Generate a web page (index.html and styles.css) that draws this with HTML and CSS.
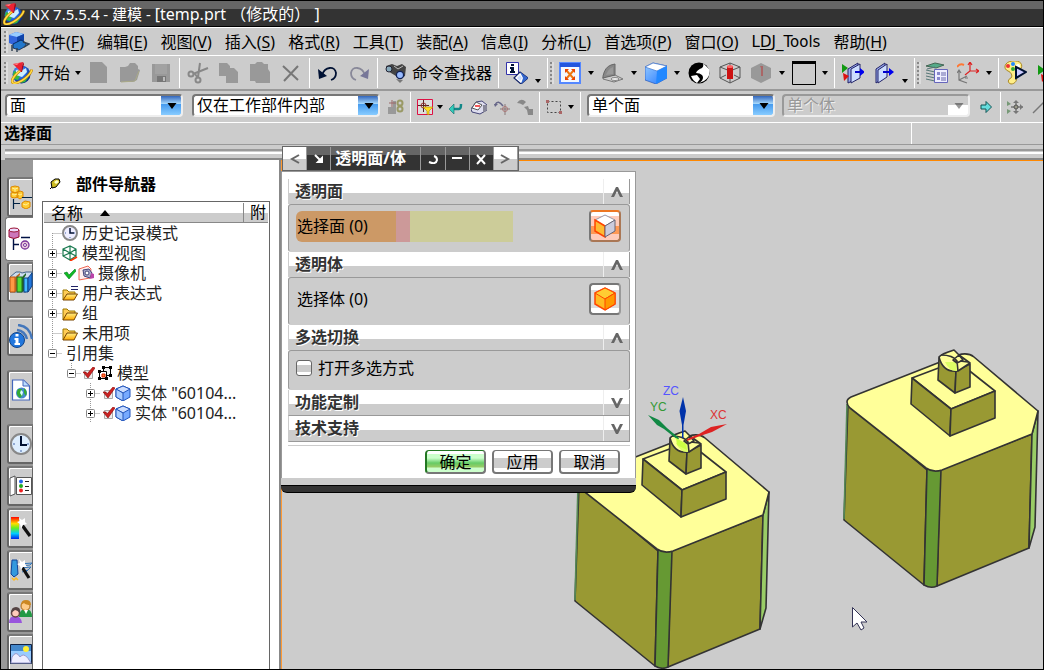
FILE: index.html
```html
<!DOCTYPE html>
<html lang="zh-CN">
<head>
<meta charset="utf-8">
<title>NX 7.5.5.4 - 建模</title>
<link rel="stylesheet" href="styles.css">
</head>
<body>
<svg class="defs" aria-hidden="true">
  <defs>
    <radialGradient id="g-ball" cx=".4" cy=".35" r=".7"><stop offset="0" stop-color="#9cf"/><stop offset=".5" stop-color="#26d"/><stop offset="1" stop-color="#027"/></radialGradient>
    <linearGradient id="g-cube" x1="0" y1="0" x2="1" y2="1"><stop offset="0" stop-color="#9cf"/><stop offset="1" stop-color="#27f"/></linearGradient>
    <linearGradient id="g-rain" x1="0" y1="0" x2="0" y2="1"><stop offset="0" stop-color="#f00"/><stop offset=".3" stop-color="#fd0"/><stop offset=".5" stop-color="#6e2"/><stop offset=".75" stop-color="#0cf"/><stop offset="1" stop-color="#02e"/></linearGradient>
    <linearGradient id="g-fold" x1="0" y1="0" x2="0" y2="1"><stop offset="0" stop-color="#fe8"/><stop offset="1" stop-color="#fa0"/></linearGradient>
  </defs>
  <symbol id="i-nx" viewBox="0 0 22 22"><circle cx="10.500" cy="12.500" r="9" fill="url(#g-ball)"/><path d="M3 9l4 1 2 4-2 4-4-1q-2-4 0-8zM12 17l5-1-3 4-4 1z" fill="#3b4"/><path d="M5 8l5 1 5-3 1 4-5 5-6-2z" fill="#cef"/><ellipse cx="11" cy="13" rx="12" ry="4.500" transform="rotate(-38 11 13)" fill="none" stroke="#b70" stroke-width="2.600" stroke-dasharray="41 14" stroke-dashoffset="-2"/><ellipse cx="11" cy="13" rx="12" ry="4.500" transform="rotate(-38 11 13)" fill="none" stroke="#fd4" stroke-width="1.600" stroke-dasharray="41 14" stroke-dashoffset="-2"/><path d="M2 2l10-2-2 10z" fill="#e23"/><path d="M12 0l1 2-2 8-1 0z" fill="#a01"/><path d="M2 2l6-1-2 2z" fill="#f88"/></symbol>
  <symbol id="i-part" viewBox="0 0 22 22"><path d="M1 4l7-3 8 2v8l-6 5-9-4z" fill="#36d"/><path d="M1 4l7-3 8 2-7 3z" fill="#9cf"/><path d="M9 6l7-3v9l-7 4z" fill="#14a"/><path d="M5 13l8-4 5 3v3l-7 4-6-2z" fill="#27c" stroke="#013" stroke-width=".7"/><path d="M15 11l6 2-5 3M4 14v6M9 17v4" stroke="#345" stroke-width="1.500" fill="none"/></symbol>
  <symbol id="i-new" viewBox="0 0 22 22"><path d="M2 0h12l5 5v16H2z" fill="#999"/></symbol>
  <symbol id="i-open" viewBox="0 0 22 22"><path d="M1 5h5l3-1 2-3h5l3 3v3l2 1-3 10-4 2H1z" fill="#999"/><path d="M2 20l14-1 4-10" stroke="#aa8" fill="none"/></symbol>
  <symbol id="i-save" viewBox="0 0 22 22"><path d="M2 2h18v18H2z" fill="#999"/><path d="M5 2h12v10H5z" fill="#a2a2a2"/><path d="M7 14h9v6H7z" fill="#777"/><path d="M13 15h2v4h-2z" fill="#bbb"/></symbol>
  <symbol id="i-cut" viewBox="0 0 22 22"><g fill="none" stroke="#888" stroke-width="2"><circle cx="4" cy="12" r="2.500"/><circle cx="11" cy="18" r="2.500"/><path d="M6 12l15-6M11 15l2-14M8 12l3 4"/></g></symbol>
  <symbol id="i-copy" viewBox="0 0 22 22"><path d="M1 1h8l3 3v10H1zM8 6h8l4 4v11H8z" fill="#999"/></symbol>
  <symbol id="i-paste" viewBox="0 0 22 22"><path d="M1 2h5l2-2h5l2 2h4v5l2 3v11H7l-1-2H1z" fill="#999"/></symbol>
  <symbol id="i-del" viewBox="0 0 22 22"><path d="M3 4l15 14M18 4L4 19" stroke="#777" stroke-width="2"/></symbol>
  <symbol id="i-undo" viewBox="0 0 22 22"><path d="M5 13C8 4 18 4 19 11c0 4-2 6-5 7" fill="none" stroke="#013" stroke-width="1.800"/><path d="M1 7l1 10 8-3z" fill="#013"/></symbol>
  <symbol id="i-redo" viewBox="0 0 22 22"><path d="M17 13C14 4 4 4 3 11c0 4 2 6 5 7" fill="none" stroke="#889" stroke-width="1.800"/><path d="M21 7l-1 10-8-3z" fill="#779"/></symbol>
  <symbol id="i-bino" viewBox="0 0 22 22"><path d="M1 4l6-2 5 2 5-2 4 3-1 9-5 3-4-3-5-3-4-3z" fill="#444"/><circle cx="4" cy="7" r="3" fill="#8ab" stroke="#223"/><circle cx="15" cy="13" r="3.600" fill="#9bf" stroke="#125" stroke-width="1.300"/><path d="M9 4l4 3 5-3" stroke="#bbb" fill="none"/><path d="M11 17l7 1-3 3z" fill="#777"/></symbol>
  <symbol id="i-info" viewBox="0 0 22 22"><path d="M.5.500h12v12H.5z" fill="#fff" stroke="#33a"/><path d="M5 2h3v2H5zM4 5h4v4h1v2H4V9h1V7H4z" fill="#013"/><path d="M8 16l6-6 8 6-7 6z" fill="#fff" stroke="#126" stroke-width="1.200"/><path d="M14 10l8 6-7 6 2-6z" fill="#36c"/><path d="M11 16l3-3 2 3-2 3z" fill="#cdf"/></symbol>
  <symbol id="i-fit" viewBox="0 0 22 22"><path d="M1 1h20v20H1z" fill="#f4f8ff" stroke="#58f" stroke-width="2"/><path d="M1 1h20v4H1z" fill="#25d"/><path d="M7 8l8 9M15 8l-8 9" stroke="#e71" stroke-width="2"/><path d="M6 7h4l-4 4zM16 7v4l-4-4zM6 18v-4l4 4zM16 18h-4l4-4z" fill="#e40"/></symbol>
  <symbol id="i-wedge" viewBox="0 0 22 22"><path d="M1 15l12-2 8 4-9 3-11-3z" fill="#ccc" stroke="#777"/><path d="M1 14Q3 5 9 3l4-1v11L1 16z" fill="#888" stroke="#666"/><path d="M4 13Q6 7 11 5v7z" fill="#999"/><ellipse cx="13" cy="17" rx="4" ry="1.500" fill="#eee" stroke="#888"/></symbol>
  <symbol id="i-cube" viewBox="0 0 22 22"><path d="M0 5l8-4 14 3v12l-11 6L0 18z" fill="url(#g-cube)" stroke="#25b" stroke-width=".7"/><path d="M0 5l8-4 14 3-10 5z" fill="#fff" stroke="#47c" stroke-width=".7"/><path d="M12 9l10-5v12l-11 6z" fill="#28f"/></symbol>
  <symbol id="i-yin" viewBox="0 0 22 22"><circle cx="11" cy="11" r="10.500" fill="#000"/><path d="M15 1l6 6q2 8-5 12l-5 2q6-4 3-8-2-2-6-2 1-3 6-5 2-2 1-5z" fill="#fff"/><path d="M3 14l6-1 3 4-3 4q-4-2-6-7z" fill="#fff"/></symbol>
  <symbol id="i-cubes" viewBox="0 0 22 22"><path d="M1 5l10-4 10 4v11l-10 5-10-5zM1 5l10 4 10-4M11 9v12M11 1v6M1 16l6-3M21 16l-6-3" fill="none" stroke="#555"/><path d="M8 4h6v13H8z" fill="#c11"/><ellipse cx="11" cy="4.500" rx="3" ry="1.500" fill="#f66"/></symbol>
  <symbol id="i-cubeg" viewBox="0 0 22 22"><path d="M1 6l10-5 10 5v10l-10 5-10-5z" fill="#999"/><path d="M10 4h3v10h-2V6z" fill="#a66"/></symbol>
  <symbol id="i-rect" viewBox="0 0 24 24"><path d="M.5 1v22.500h23V1" fill="#ccc" stroke="#000"/><path d="M0 0h24v3H0z" fill="#000"/></symbol>
  <symbol id="i-clip1" viewBox="0 0 22 22"><path d="M6 7l10-6v15L6 21z" fill="#9ae" stroke="#226"/><path d="M9 7l9-5v14L9 21z" fill="#cdf" stroke="#226"/><path d="M0 2l6 4-6 5z" fill="#191"/><path d="M1 11l6 3-5 5z" fill="#d11"/><path d="M13 10h6" stroke="#00c" stroke-width="2"/><path d="M18 6l5 4-5 4z" fill="#00e"/></symbol>
  <symbol id="i-clip2" viewBox="0 0 22 22"><path d="M3 7l9-6v14l-9 6z" fill="#9ae" stroke="#226"/><path d="M5 8l9-6v13l-9 6z" fill="#cdf" stroke="#226"/><path d="M10 10h8" stroke="#00c" stroke-width="2"/><path d="M16 6l5 4-5 4z" fill="#00e"/></symbol>
  <symbol id="i-layer" viewBox="0 0 22 22"><path d="M0 4l9-3 9 2-8 3z" fill="#5a8" stroke="#465"/><path d="M0 8l9 2M0 11l9 2M0 14l9 2M0 17l9 2M1 7l8-2" fill="none" stroke="#577"/><path d="M8.500 7.500h13v13h-13z" fill="#eef" stroke="#66b"/><path d="M11 10h3v3h-3zM11 15h3v3h-3z" fill="#88c"/><path d="M15 11h5M15 13h5M15 16h5M15 18h5" stroke="#66a"/></symbol>
  <symbol id="i-csys" viewBox="0 0 22 22"><path d="M13 1v8l-5 4M13 9h8M11 3l2-3 2 3M19 7l3 2-3 2" fill="none" stroke="#d22" stroke-width="1.200"/><path d="M2 9v9l8 3M2 18l8-4M0 11l2-3 2 3M8 16l3 0" fill="none" stroke="#777" stroke-width="1.200"/><path d="M0 5q3-4 7-2" stroke="#f73" fill="none" stroke-width="2"/></symbol>
  <symbol id="i-pal" viewBox="0 0 24 24"><path d="M9 0c9-1 12 4 8 9-3 3-5 2-4 6 2 4-1 8-5 8-4-1-3-5 0-6 2-2 0-6-3-7-5-2-4-9 4-10z" fill="#fe8" stroke="#a82"/><circle cx="5" cy="5" r="2" fill="#e33"/><circle cx="10" cy="3" r="2" fill="#28f"/><circle cx="15" cy="5" r="2" fill="#fff"/><circle cx="10" cy="8" r="2" fill="#3a3"/><path d="M13 6l10 5-10 6z" fill="#ccf" stroke="#013" stroke-width="2"/></symbol>
  <symbol id="i-gored" viewBox="0 0 22 22"><path d="M6 3l7 5-7 5z" fill="#191"/><path d="M9 12l6 3-5 5z" fill="#d11"/></symbol>
  <symbol id="i-caret" viewBox="0 0 6 4"><path d="M0 0h6L3 4z" fill="#000"/></symbol>

  <symbol id="s-links" viewBox="0 0 16 16"><path d="M0 8h8v7H0zM5 2h3v8H5z" fill="#999"/><path d="M1 4h7M4 1v7" stroke="#966"/><circle cx="12" cy="4" r="2.500" fill="none" stroke="#996" stroke-width="2"/><circle cx="12" cy="10" r="2.500" fill="none" stroke="#996" stroke-width="2"/></symbol>
  <symbol id="s-filter" viewBox="0 0 16 16"><path d="M.5.500h15v15H.5z" fill="#ddd" stroke="#d14"/><path d="M6.500 1v12M1 6.500h11" stroke="#522"/><circle cx="6.500" cy="6.500" r="2.500" fill="none" stroke="#933"/><path d="M6 8h10l-4 4v4l-2-1v-3z" fill="#fd2" stroke="#a80" stroke-width=".6"/></symbol>
  <symbol id="s-back" viewBox="0 0 16 16"><path d="M5 10h6q2 0 2-5" stroke="#188" stroke-width="2.500" fill="none"/><path d="M6 5v10L1 10z" fill="#3cb" stroke="#166" stroke-width=".6"/></symbol>
  <symbol id="s-sheet" viewBox="0 0 16 16"><path d="M0 10l5-7 6-1 5 4v5l-7 4-8-2z" fill="#dde" stroke="#447"/><path d="M5 3l6 3-4 5-6-2z" fill="#fff" stroke="#555"/><path d="M4 7l5 0" stroke="#e22" stroke-width="1.500"/><path d="M12 6l4 0v5l-4 3z" fill="#889"/></symbol>
  <symbol id="s-snap" viewBox="0 0 16 16"><path d="M1 6q3-6 8 1" stroke="#668" stroke-width="1.600" fill="none"/><path d="M0 5h4L1 8z" fill="#668"/><path d="M11 5v11M6 10h10" stroke="#877"/><circle cx="11" cy="10" r="2.500" fill="none" stroke="#a77"/></symbol>
  <symbol id="s-chain" viewBox="0 0 16 16"><path d="M0 4q4-6 9-1l-3 3q-3-2-6-2zM7 8l4-1 1 3h4v6h-5l-1-5z" fill="#888"/></symbol>
  <symbol id="s-marq" viewBox="0 0 16 16"><path d="M1.500 2.500h13v11h-13z" fill="none" stroke="#444" stroke-dasharray="2 2"/><path d="M0 1h3v3H0zM13 12h3v3h-3z" fill="#a66"/></symbol>
  <symbol id="s-go" viewBox="0 0 16 16"><path d="M3 6h5V2.500l5.500 5.500L8 13.500V10H3z" fill="#6dd" stroke="#155"/></symbol>
  <symbol id="s-ptsn" viewBox="0 0 16 16"><path d="M0 2l4 3-4 2zM0 10l4 2-4 3z" fill="#797"/><path d="M9 2v12M4 8h12" stroke="#777" stroke-width="1.500"/><path d="M6 4l3-3 3 3zM6 12l3 3 3-3zM13 5l3 3-3 3z" fill="#777"/><circle cx="9" cy="8" r="2" fill="#998" stroke="#555"/></symbol>
  <symbol id="s-line" viewBox="0 0 16 16"><path d="M3 14L14 3" stroke="#777" stroke-width="1.500"/></symbol>

  <symbol id="t-plus" viewBox="0 0 15 20"><path d="M5.500 0v20M5.500 10.500H15" stroke="#999" stroke-dasharray="1 1"/><rect x="1.500" y="6.500" width="8" height="8" rx="1" fill="#fff" stroke="#888"/><path d="M3 10.500h5M5.500 8v5" stroke="#000"/></symbol>
  <symbol id="t-minus" viewBox="0 0 15 20"><path d="M5.500 0v6M5.500 10.500H15" stroke="#999" stroke-dasharray="1 1"/><rect x="1.500" y="6.500" width="8" height="8" rx="1" fill="#fff" stroke="#888"/><path d="M3 10.500h5" stroke="#000"/></symbol>
  <symbol id="t-first" viewBox="0 0 15 20"><path d="M5.500 10v10M5.500 10.500H15" stroke="#999" stroke-dasharray="1 1"/></symbol>
  <symbol id="t-leaf" viewBox="0 0 15 20"><path d="M5.500 0v20M5.500 10.500H15" stroke="#999" stroke-dasharray="1 1"/></symbol>
  <symbol id="n-clock" viewBox="0 0 16 16"><circle cx="8" cy="8" r="7" fill="#eef" stroke="#888" stroke-width="2"/><path d="M8 3v5h4" stroke="#013" stroke-width="1.500" fill="none"/><path d="M3 8h1M8 12v1M12 8h1" stroke="#46a"/></symbol>
  <symbol id="n-view" viewBox="0 0 16 16"><path d="M1 4l7-3 6 3v7l-6 4-7-4zM1 4l7 4 6-4M8 8v7M8 1v7M1 11l7-3 6 3" fill="none" stroke="#1a7a50" stroke-width="1.200"/><path d="M8 16l7-4" stroke="#f30" stroke-width="1.600"/></symbol>
  <symbol id="n-ok" viewBox="0 0 12 12"><path d="M0 6l3-1 2 3 6-6 1 2-7 8z" fill="#1b2" stroke="#072" stroke-width=".6"/></symbol>
  <symbol id="n-cam" viewBox="0 0 16 16"><path d="M1 4l9-3 3 3-1 9-11 2z" fill="#fee" stroke="#e65"/><path d="M5 5l6-1 3 4-2 5-6-2z" fill="#aac" stroke="#447"/><circle cx="9" cy="8" r="2" fill="#fff" stroke="#447"/><path d="M13 8l3 1v4l-4 1z" fill="#b4a"/></symbol>
  <symbol id="n-fold" viewBox="0 0 16 16"><path d="M1 15V4h4l2 2h6v3" fill="#fc5" stroke="#970"/><path d="M1 15l4-7h10.500l-3.500 7z" fill="url(#g-fold)" stroke="#740"/></symbol>
  <symbol id="n-foldx" viewBox="0 0 16 16"><path d="M1 15V5h4l2 2h6v2" fill="#fc5" stroke="#970"/><path d="M1 15l4-6h10.500l-3.500 6z" fill="url(#g-fold)" stroke="#740"/><path d="M9 1.500h7M9 4.500h7" stroke="#226"/></symbol>
  <symbol id="n-red" viewBox="0 0 12 12"><path d="M1.500 3.500h8v8h-8z" fill="#eee" stroke="#aaa"/><path d="M0 5l3 0 1 2 6-7 2 1-7 10z" fill="#c22" stroke="#800" stroke-width=".6"/></symbol>
  <symbol id="n-set" viewBox="0 0 16 16"><path d="M6.500 2.500h7v8h-7z" fill="#eee" stroke="#000"/><path d="M2.500 6.500h7v7h-7z" fill="#fff" stroke="#000"/><path d="M5 1h3v3H5zM12 1h3v3h-3zM12 9h3v3h-3zM1 5h3v3H1zM1 12h3v3H1zM8 12h3v3H8z" fill="#000"/><path d="M5 9h3v3H5z" fill="#f83" stroke="#d20"/></symbol>
  <symbol id="n-body" viewBox="0 0 16 16"><path d="M1 4l7-3 7 3v8l-7 4-7-4z" fill="#7af" stroke="#25b"/><path d="M1 4l7-3 7 3-7 4z" fill="#cdf" stroke="#25b"/><path d="M8 8v8l-7-4V4z" fill="#acf" stroke="#25b"/></symbol>
  <symbol id="n-pin" viewBox="0 0 12 12"><path d="M2 4l4-3 4 0 1 3-4 5-4 1z" fill="#cb2" stroke="#000"/><path d="M5 4l3-2 2 2-3 2z" fill="#ffc"/><path d="M3 9l-2 2" stroke="#000"/></symbol>

  <symbol id="b-asm" viewBox="0 0 24 24"><g fill="#fc3" stroke="#d80"><path d="M2 2l4-1 4 1v4l-4 2-4-2zM2 8l4-1 3 1v4l-4 1-3-1zM8 8l3-2 3 1v5l-3 2-3-2zM13 18l3-2 5 1v5l-4 2-4-2z"/></g><path d="M3 3l3 1 3-1M6 4v3M3 9l2 1 3-1M9 9l2 1 2-1M14 19l3 1 3-2" stroke="#fe9" fill="none"/><path d="M4.500 14v10M4 18.500h7M13 12.500h10" stroke="#024" stroke-width="1.200"/></symbol>
  <symbol id="b-part" viewBox="0 0 24 24"><path d="M1 3v7q5 3 10 0V3z" fill="#c7b" stroke="#913"/><ellipse cx="6" cy="3" rx="5" ry="2" fill="#edf" stroke="#913"/><path d="M5.500 12v11M5 17.500h6M13 10.500h9" stroke="#014" stroke-width="1.400"/><circle cx="17" cy="18" r="4" fill="#ecd" stroke="#739" stroke-width="1.300"/><circle cx="17" cy="18" r="1.500" fill="#fff" stroke="#739"/></symbol>
  <symbol id="b-books" viewBox="0 0 24 24"><path d="M1 7l6-5h4l2 1 4-1 6 0v14l-6 6H1z" fill="#cde" stroke="#468"/><path d="M1 7h5v15H1z" fill="#f94" stroke="#b51"/><path d="M6 7l5-4v2L8 8v13l-2 1z" fill="#b62"/><path d="M8 7h5v15H8z" fill="#5d3" stroke="#262"/><path d="M13 7l4-4v2l-2 3v13l-2 1z" fill="#262"/><path d="M15 8h4v14h-4z" fill="#4bf" stroke="#148"/><path d="M19 8l4-5v13l-4 6z" fill="#27d" stroke="#148"/></symbol>
  <symbol id="b-rss" viewBox="0 0 24 24"><circle cx="8" cy="16" r="7.500" fill="#27d" stroke="#148"/><path d="M6.500 10h3v2.500h-3zM5.500 14h4v5h1.500v2h-5.500v-2h1v-3h-1z" fill="#fff"/><path d="M8 6q8 1 10 9M9 1q12 1 14 14" fill="none" stroke="#47b" stroke-width="2.400"/></symbol>
  <symbol id="b-web" viewBox="0 0 24 24"><path d="M3.500 2h11l6 6v14h-17z" fill="#fff" stroke="#46b" stroke-width="1.200"/><path d="M14 2v6h6" fill="#bdf" stroke="#46b"/><circle cx="12.500" cy="15" r="5.500" fill="#48c"/><path d="M9 11l4 0-1 3 2 3-3 3q-5-3-2-9zM15 10q4 3 2 8l-2-3z" fill="#3a3"/><path d="M12 12l2 2-1 4-2-3z" fill="#dff"/></symbol>
  <symbol id="b-clock" viewBox="0 0 24 24"><circle cx="12" cy="12" r="10" fill="#def" stroke="#888" stroke-width="2"/><path d="M12 4v9h6" fill="none" stroke="#013" stroke-width="2"/><path d="M4 12h2M12 18v2M18 12h2" stroke="#46a"/></symbol>
  <symbol id="b-pal" viewBox="0 0 24 24"><path d="M1 4l5-2v18l-5 2z" fill="#fff" stroke="#555"/><path d="M7.500 3.500h15v17h-15z" fill="#fff" stroke="#555"/><circle cx="12" cy="7.500" r="2" fill="#26e"/><circle cx="12" cy="12" r="2" fill="#2a2"/><circle cx="12" cy="16.500" r="2" fill="#e22"/><path d="M16 7.500h4M16 12.500h4M16 16.500h4" stroke="#222"/></symbol>
  <symbol id="b-rain" viewBox="0 0 24 24"><path d="M2 1h8v22H2z" fill="url(#g-rain)"/><path d="M13 9l8 11" stroke="#111" stroke-width="3.200"/><path d="M10 2l3 2 3-2 0 4 2 2-4 1-2 4-1-5-3-2 3-1z" fill="#fff"/></symbol>
  <symbol id="b-wand" viewBox="0 0 24 24"><path d="M3 2l5 0 1 14-4 3-3-3z" fill="#39d" stroke="#149"/><path d="M11 6l12-1-2 2-9 1M12 10l10-1-3 3M13 14l6-2-3 3" stroke="#37b" fill="none"/><path d="M3 20l2 2 2-2 2 2" stroke="#fb2" stroke-width="1.500" fill="none"/><path d="M13 9l7 11" stroke="#111" stroke-width="3.200"/><path d="M10 1l3 3 3-2 0 4 2 3-4 0-2 3-1-4-3-2 3-1z" fill="#fff"/></symbol>
  <symbol id="b-users" viewBox="0 0 24 24"><path d="M10 17q0-8 7-8 6 0 6 8z" fill="#294"/><circle cx="16.500" cy="6" r="4.500" fill="#fc8" stroke="#a61"/><path d="M12 5q0-5 5-5t5 5q-5 0-7-2z" fill="#c82"/><path d="M15 10l2 4 2-4z" fill="#fff"/><path d="M0 23q0-7 6-7t7 7z" fill="#95d"/><circle cx="6.500" cy="13" r="4" fill="#fcb" stroke="#644" stroke-width="1.500"/><path d="M2 13q0-6 5-6t4 6q-3-3-5-3z" fill="#544"/></symbol>
  <symbol id="b-pic" viewBox="0 0 24 24"><path d="M1.500 2.500h21v19h-21z" fill="#48c" stroke="#124"/><path d="M2 9h20v12H2z" fill="#9cf"/><circle cx="17" cy="7" r="3" fill="#fe3"/><path d="M2 21l1-6q4-7 8 0l1-1q4-4 10 7z" fill="#eef" stroke="#99c"/></symbol>
  <symbol id="c-up" viewBox="0 0 12 10"><path d="M0 10L5 0h2l5 10H9L6 4l-3 6z" fill="#666"/></symbol>
  <symbol id="c-down" viewBox="0 0 12 10"><path d="M0 0l5 10h2l5-10H9L6 6 3 0z" fill="#666"/></symbol>
</svg>

<div class="app">
  <header class="titlebar"><svg class="ic22"><use href="#i-nx"/></svg><h1>NX 7.5.5.4 - 建模 - <span>[temp.prt （修改的） ]</span></h1></header>

  <nav class="menubar">
    <span class="grip"></span><svg class="ic22"><use href="#i-part"/></svg>
    <button>文件(<u>F</u>)</button><button>编辑(<u>E</u>)</button><button>视图(<u>V</u>)</button><button>插入(<u>S</u>)</button><button>格式(<u>R</u>)</button><button>工具(<u>T</u>)</button><button>装配(<u>A</u>)</button><button>信息(<u>I</u>)</button><button>分析(<u>L</u>)</button><button>首选项(<u>P</u>)</button><button>窗口(<u>O</u>)</button><button class="latin">L<u>D</u>J_Tools</button><button>帮助(<u>H</u>)</button>
  </nav>

  <div class="toolbar">
    <span class="grip"></span>
    <button class="start"><svg class="ic22"><use href="#i-nx"/></svg>开始<svg class="caret"><use href="#i-caret"/></svg></button>
    <button class="tb" aria-label="新建"><svg><use href="#i-new"/></svg></button><button class="tb" aria-label="打开"><svg><use href="#i-open"/></svg></button><button class="tb" aria-label="保存"><svg><use href="#i-save"/></svg></button>
    <i class="sep"></i>
    <button class="tb" aria-label="剪切"><svg><use href="#i-cut"/></svg></button><button class="tb" aria-label="复制"><svg><use href="#i-copy"/></svg></button><button class="tb" aria-label="粘贴"><svg><use href="#i-paste"/></svg></button><button class="tb" aria-label="删除"><svg><use href="#i-del"/></svg></button>
    <i class="sep"></i>
    <button class="tb" aria-label="撤消"><svg><use href="#i-undo"/></svg></button><button class="tb" aria-label="重做"><svg><use href="#i-redo"/></svg></button>
    <i class="sep"></i>
    <button class="finder"><svg class="ic22"><use href="#i-bino"/></svg>命令查找器</button>
    <i class="sep"></i>
    <button class="tb" aria-label="信息"><svg><use href="#i-info"/></svg></button><button class="drop low" aria-label="更多"><svg><use href="#i-caret"/></svg></button>
    <i class="sep"></i><span class="grip"></span>
    <button class="tb" aria-label="适合窗口"><svg><use href="#i-fit"/></svg></button><button class="drop" aria-label="更多"><svg><use href="#i-caret"/></svg></button>
    <button class="tb" aria-label="定向"><svg><use href="#i-wedge"/></svg></button><button class="drop" aria-label="更多"><svg><use href="#i-caret"/></svg></button>
    <button class="tb" aria-label="着色"><svg><use href="#i-cube"/></svg></button><button class="drop" aria-label="更多"><svg><use href="#i-caret"/></svg></button>
    <button class="tb" aria-label="对比"><svg><use href="#i-yin"/></svg></button><button class="tb" aria-label="透视"><svg><use href="#i-cubes"/></svg></button><button class="tb" aria-label="隐藏"><svg><use href="#i-cubeg"/></svg></button><button class="drop" aria-label="更多"><svg><use href="#i-caret"/></svg></button>
    <button class="tb" aria-label="背景"><svg class="big"><use href="#i-rect"/></svg></button><button class="drop" aria-label="更多"><svg><use href="#i-caret"/></svg></button>
    <i class="sep"></i>
    <button class="tb" aria-label="编辑截面"><svg><use href="#i-clip1"/></svg></button><button class="tb" aria-label="剪切截面"><svg><use href="#i-clip2"/></svg></button><button class="drop low" aria-label="更多"><svg><use href="#i-caret"/></svg></button>
    <i class="sep"></i><span class="grip"></span>
    <button class="tb" aria-label="图层"><svg><use href="#i-layer"/></svg></button><button class="tb" aria-label="坐标系"><svg><use href="#i-csys"/></svg></button><button class="drop" aria-label="更多"><svg><use href="#i-caret"/></svg></button>
    <i class="sep"></i>
    <button class="tb last" aria-label="显示"><svg class="big"><use href="#i-pal"/></svg></button><button class="tb last" aria-label="运行"><svg><use href="#i-gored"/></svg></button>
  </div>

  <div class="selbar">
    <span class="combo narrow"><select aria-label="类型过滤器"><option>面</option></select><svg><use href="#i-caret"/></svg></span>
    <span class="combo"><select aria-label="选择范围"><option>仅在工作部件内部</option></select><svg><use href="#i-caret"/></svg></span>
    <button class="sb lead" aria-label="关联"><svg><use href="#s-links"/></svg></button>
    <i class="sep"></i>
    <button class="sb" aria-label="过滤器"><svg><use href="#s-filter"/></svg></button><button class="drop slim" aria-label="更多"><svg><use href="#i-caret"/></svg></button>
    <button class="sb" aria-label="返回"><svg><use href="#s-back"/></svg></button><button class="sb" aria-label="全选"><svg><use href="#s-sheet"/></svg></button><button class="sb" aria-label="捕捉"><svg><use href="#s-snap"/></svg></button><button class="sb" aria-label="链"><svg><use href="#s-chain"/></svg></button>
    <i class="sep"></i>
    <button class="sb" aria-label="框选"><svg><use href="#s-marq"/></svg></button><button class="drop" aria-label="更多"><svg><use href="#i-caret"/></svg></button>
    <i class="sep"></i>
    <span class="combo third"><select aria-label="面规则"><option>单个面</option></select><svg><use href="#i-caret"/></svg></span>
    <span class="combo off"><select aria-label="体规则" disabled><option>单个体</option></select><svg><use href="#i-caret"/></svg></span>
    <button class="sb lead" aria-label="前进"><svg><use href="#s-go"/></svg></button>
    <i class="sep"></i>
    <button class="sb" aria-label="捕捉点"><svg><use href="#s-ptsn"/></svg></button><button class="sb" aria-label="直线"><svg><use href="#s-line"/></svg></button>
  </div>

  <div class="prompt"><strong>选择面</strong><span class="status"></span></div>
  <div class="rail"></div>

  <main class="work">
    <aside class="tabs">
      <button aria-label="装配导航器"><svg><use href="#b-asm"/></svg></button>
      <button class="active" aria-label="部件导航器"><svg><use href="#b-part"/></svg></button>
      <button aria-label="重用库"><svg><use href="#b-books"/></svg></button>
      <button class="apart" aria-label="HD3D"><svg><use href="#b-rss"/></svg></button>
      <button class="apart" aria-label="浏览器"><svg><use href="#b-web"/></svg></button>
      <button class="apart" aria-label="历史记录"><svg><use href="#b-clock"/></svg></button>
      <button class="near" aria-label="材料"><svg><use href="#b-pal"/></svg></button>
      <button class="near" aria-label="可视化"><svg><use href="#b-rain"/></svg></button>
      <button class="near" aria-label="向导"><svg><use href="#b-wand"/></svg></button>
      <button class="near" aria-label="角色"><svg><use href="#b-users"/></svg></button>
      <button class="near" aria-label="场景"><svg><use href="#b-pic"/></svg></button>
    </aside>

    <section class="navigator">
      <h2><svg class="ic12"><use href="#n-pin"/></svg>部件导航器</h2>
      <div class="tree">
        <div class="cols"><span class="name">名称<svg class="sort" viewBox="0 0 10 6"><path d="M0 6h10L5 0z"/></svg></span><span class="extra">附</span></div>
        <ul>
          <li><svg class="twig"><use href="#t-first"/></svg><svg class="ic16"><use href="#n-clock"/></svg><span>历史记录模式</span></li>
          <li><svg class="twig"><use href="#t-plus"/></svg><svg class="ic16"><use href="#n-view"/></svg><span>模型视图</span></li>
          <li><svg class="twig"><use href="#t-plus"/></svg><svg class="mark"><use href="#n-ok"/></svg><svg class="ic16"><use href="#n-cam"/></svg><span>摄像机</span></li>
          <li><svg class="twig"><use href="#t-plus"/></svg><svg class="ic16"><use href="#n-foldx"/></svg><span>用户表达式</span></li>
          <li><svg class="twig"><use href="#t-plus"/></svg><svg class="ic16"><use href="#n-fold"/></svg><span>组</span></li>
          <li><svg class="twig"><use href="#t-leaf"/></svg><svg class="ic16"><use href="#n-fold"/></svg><span>未用项</span></li>
          <li><svg class="twig"><use href="#t-minus"/></svg><span>引用集</span></li>
          <li class="in1"><svg class="twig"><use href="#t-minus"/></svg><svg class="mark"><use href="#n-red"/></svg><svg class="ic16"><use href="#n-set"/></svg><span>模型</span></li>
          <li class="in2"><svg class="twig"><use href="#t-plus"/></svg><svg class="mark"><use href="#n-red"/></svg><svg class="ic16"><use href="#n-body"/></svg><span>实体 "60104...</span></li>
          <li class="in2"><svg class="twig"><use href="#t-plus"/></svg><svg class="mark"><use href="#n-red"/></svg><svg class="ic16"><use href="#n-body"/></svg><span>实体 "60104...</span></li>
        </ul>
      </div>
    </section>

    <section class="viewport">
      <svg class="scene" viewBox="282 161 761 508" preserveAspectRatio="xMinYMin slice">
        <defs>
          <g id="solid" stroke="#333" stroke-width="1.600" stroke-linejoin="round">
            <path d="M848 404L927 470L924 585L844 520z" fill="#993"/>
            <path d="M847 404L844 519" stroke="#585"/>
            <path d="M940 470L1032 434L1029 548L937 586z" fill="#993"/>
            <path d="M1032 434L1038 411L1035 527L1029 548z" fill="#9c6"/>
            <path d="M927 469L941 470L937 586Q931 589 924 585z" fill="#693"/>
            <path d="M847 402Q847 399 851 397L958 355Q968 352 974 357L1038 411L1032 434L942 470Q933 473 926 468L850 408Q847 405 847 402z" fill="#ff9"/>
            <path d="M912 378L951 409L995 391L957 361z" fill="#ff9"/>
            <path d="M912 378L951 409L950 436L911 404z" fill="#993"/>
            <path d="M951 409L995 391L995 418L950 436z" fill="#993"/>
            <path d="M939 358L956 371L955 393L938 380z" fill="#993"/>
            <path d="M956 371L970 364L970 387L955 393z" fill="#993"/>
            <path d="M939 357Q941 354 954 350L959 355L970 363L958 371Q943 373 939 357z" fill="#ff9"/>
            <path d="M945 362Q950 372 957 371L956 362z" fill="#df6" stroke="none"/>
            <path d="M941 355Q953 355 957 361L958 371M953 360L959 355L963 360L957 363zM960 361L968 362" fill="none"/>
          </g>
        </defs>
        <use href="#solid"/>
        <use href="#solid" x="-269" y="81"/>
        <g class="axis">
          <path d="M682 438V425L679.500 411L683 397L686 411L683.500 425V438z" fill="#03a"/>
          <path d="M678 440L664 429L657 425L648 415L659 420L667 428L679 438z" fill="#184"/>
          <path d="M687 441L700 436L712 432L727 424L711 427L699 434L687 439z" fill="#d22"/>
          <path d="M676 438L685 443L687 450L677 445z" fill="#cf4"/>
          <text x="663" y="395" fill="#55f">ZC</text><text x="650" y="411" fill="#393">YC</text><text x="710" y="419" fill="#d33">XC</text>
        </g>
        <path d="M852.500 607.500V627L857 623L861 630L864 628L861 622H867z" fill="#fff" stroke="#335"/>
      </svg>

      <form class="dialog" onsubmit="return false">
        <div class="caption">
          <button class="light" type="button" aria-label="上一个"><svg viewBox="0 0 12 12"><path d="M10 2L3 6l7 4"/></svg></button>
          <button type="button" aria-label="固定"><svg viewBox="0 0 12 12"><path d="M2 2l6 6M9 5v4H5z"/></svg></button>
          <h2>透明面/体</h2>
          <button type="button" aria-label="重置"><svg viewBox="0 0 12 12"><path d="M2 9q7 3 8-2 0-3-3-4"/></svg></button>
          <button type="button" aria-label="最小化"><svg viewBox="0 0 12 12"><path d="M1 5h10"/></svg></button>
          <button type="button" aria-label="关闭"><svg viewBox="0 0 12 12"><path d="M2 2l8 9M10 2l-8 9"/></svg></button>
          <button class="light" type="button" aria-label="下一个"><svg viewBox="0 0 12 12"><path d="M2 2l7 4-7 4"/></svg></button>
        </div>
        <div class="sheet">
          <div class="group"><h3>透明面</h3><button type="button" aria-label="折叠"><svg><use href="#c-up"/></svg></button></div>
          <div class="panel"><span class="pick current">选择面 (0)</span><button class="picker hot" type="button" aria-label="选择面"><svg viewBox="0 0 22 24"><path d="M1 6l10-5 10 5-10 6z" fill="#fff" stroke="#99a"/><path d="M1 6l10 6v11L1 17z" fill="#fb3" stroke="#f40" stroke-width="1.500"/><path d="M11 12l10-6v11l-10 6z" fill="#ccd" stroke="#667"/></svg></button></div>
          <div class="group"><h3>透明体</h3><button type="button" aria-label="折叠"><svg><use href="#c-up"/></svg></button></div>
          <div class="panel"><span class="pick">选择体 (0)</span><button class="picker" type="button" aria-label="选择体"><svg viewBox="0 0 22 24"><path d="M1 6l10-5 10 5v11l-10 6-10-6z" fill="#fb2" stroke="#f40" stroke-width="1.500"/><path d="M1 6l10-5 10 5-10 6z" fill="#fc3" stroke="#f40"/><path d="M11 12l10-6v11l-10 6z" fill="#f90" stroke="#f40"/></svg></button></div>
          <div class="group"><h3>多选切换</h3><button type="button" aria-label="折叠"><svg><use href="#c-up"/></svg></button></div>
          <div class="panel short"><label><input type="checkbox">打开多选方式</label></div>
          <div class="group shut"><h3>功能定制</h3><button type="button" aria-label="展开"><svg><use href="#c-down"/></svg></button></div>
          <div class="group shut"><h3>技术支持</h3><button type="button" aria-label="展开"><svg><use href="#c-down"/></svg></button></div>
          <div class="actions"><button class="ok" type="submit">确定</button><button type="button">应用</button><button type="button">取消</button></div>
        </div>
        <div class="foot"></div>
      </form>
    </section>
  </main>
</div>
</body>
</html>
```
FILE: styles.css
```css
* { box-sizing: border-box; }
body {
  margin: 0;
  font: 16px/20px "Noto Sans", "Noto Sans CJK SC", sans-serif;
  color: #000;
  background: #000;
}
button, select, input { font: inherit; color: inherit; margin: 0; }
button { border: 0; padding: 0; background: none; white-space: nowrap; flex: none; }
svg { display: block; flex: none; }
h1, h2, h3, ul { margin: 0; padding: 0; font-size: 16px; }
.defs { position: absolute; width: 0; height: 0; }
.ic22 { width: 22px; height: 22px; }
.ic16 { width: 16px; height: 16px; }
.ic12 { width: 12px; height: 12px; }

.app {
  height: 100vh;
  display: flex;
  flex-direction: column;
  overflow: hidden;
  border: 1px solid #000;
  background: #ccc;
}
.app > * { flex: none; }
.titlebar {
  height: 26px;
  display: flex;
  align-items: center;
  gap: 4px;
  padding: 0 2px;
  border-bottom: 1px solid #000;
  background: linear-gradient(#666 8px, #333 8px);
  color: #fff;
}
.titlebar h1 { font-weight: 400; font-size: 15px; white-space: pre; }
.titlebar span { font-size: 16px; }

.grip {
  flex: none;
  width: 4px;
  height: 22px;
  background: repeating-linear-gradient(#888 0 2px, #ccc 2px 4px);
  border-right: 2px solid #ddd;
}
.menubar {
  height: 29px;
  display: flex;
  align-items: center;
  border-top: 1px solid #fff;
  border-bottom: 1px solid #fff;
  padding-left: 3px;
}
.menubar > svg { margin-right: 4px; }
.menubar button { margin-right: 13px; }
.menubar u { text-underline-offset: 2px; text-decoration-thickness: 1px; }
.menubar .latin { font-family: "DejaVu Sans", sans-serif; font-size: 15px; }

.toolbar {
  height: 35px;
  display: flex;
  align-items: center;
  overflow: hidden;
  padding-left: 3px;
  border-bottom: 2px solid #999;
}
.start { display: flex; align-items: center; gap: 5px; width: 75px; padding-left: 3px; }
.caret { width: 6px; height: 4px; }
.finder { display: flex; align-items: center; gap: 5px; width: 115px; padding-left: 5px; }
.tb { width: 31px; height: 30px; display: grid; place-items: center; }
.tb svg { width: 22px; height: 22px; }
.tb .big { width: 24px; height: 24px; }
.tb.last { width: 28px; }
.drop { width: 12px; height: 30px; display: grid; place-items: center; }
.drop svg { width: 6px; height: 4px; }
.drop.low { padding-top: 16px; }
.drop.slim { width: 8px; }
.sep { flex: none; align-self: stretch; width: 6px; background: linear-gradient(#fff, #fff) center / 1px 30px no-repeat; }

.selbar {
  height: 32px;
  display: flex;
  align-items: center;
  overflow: hidden;
  padding-left: 4px;
  border-bottom: 1px solid #fff;
}
.sb { width: 23px; height: 24px; display: grid; place-items: center; }
.sb svg { width: 16px; height: 16px; }
.sb.lead { margin-left: 4px; }
.combo { flex: none; display: grid; width: 188px; height: 23px; margin-bottom: 2px; }
.combo > * { grid-area: 1 / 1; }
.combo.narrow { width: 178px; margin-right: 9px; }
.combo.third { margin-left: 4px; margin-right: 7px; }
.combo select {
  appearance: none;
  width: 100%;
  height: 23px;
  padding: 0 24px 0 3px;
  border: 2px solid #777;
  border-right-color: #eee;
  border-bottom-color: #eee;
  border-radius: 4px;
  line-height: 19px;
  opacity: 1;
  background: linear-gradient(#36b, #adf 8px, #49e 8px, #8cf) right / 20px 100% no-repeat #fff;
}
.combo svg { width: 10px; height: 6px; justify-self: end; align-self: center; margin-right: 6px; pointer-events: none; }
.combo.off select { color: #999; border-color: #999 #eee #eee #999; background: linear-gradient(#ccc 9px, #fff 9px) right / 20px 100% no-repeat #ccc; text-shadow: 1px 1px #eee; }
.combo.off svg { opacity: .4; }

.prompt { height: 22px; display: flex; padding-left: 3px; border-bottom: 1px solid #999; line-height: 20px; }
.status { margin-left: auto; width: 132px; border-left: 1px solid #fff; }
.rail {
  height: 15px;
  margin-left: 4px;
  background: linear-gradient(#ccc 4px, #999 4px 6px, #ccc 6px 7px, #fff 7px 9px, #ccc 9px 13px, #888 13px);
}

.app > .work { flex: 1; min-height: 0; display: flex; }
.tabs {
  width: 32px;
  flex: none;
  display: flex;
  flex-direction: column;
  align-items: flex-end;
  overflow: hidden;
  padding-top: 17px;
  background: #999;
}
.tabs button {
  width: 26px;
  height: 40px;
  display: grid;
  place-items: center;
  border: 2px solid #666;
  border-top-color: #777;
  border-right-width: 1px;
  border-radius: 3px 0 0 3px;
  background: #ccc;
  box-shadow: inset 1px 1px #fff;
}
.tabs svg { width: 24px; height: 24px; }
.tabs .active { width: 28px; height: 44px; background: #fff; border: 1px solid #777; border-right: 0; margin-bottom: 1px; }
.tabs .apart { margin-top: 14px; }
.tabs .apart ~ .near { margin-top: 2px; }

.navigator {
  width: 248px;
  flex: none;
  display: flex;
  flex-direction: column;
  padding: 14px 9px 0 9px;
  background: #fff;
  border-right: 2px solid #888;
}
.navigator h2 { display: flex; align-items: center; gap: 15px; padding-left: 7px; height: 20px; margin-bottom: 7px; }
.tree { flex: 1; min-height: 0; border: 1px solid #666; border-bottom: 0; padding: 1px; }
.cols { display: flex; height: 20px; border-bottom: 1px solid #888; background: linear-gradient(#fff 10px, #ccc 10px); line-height: 18px; }
.name { flex: 1; display: flex; align-items: center; gap: 17px; padding-left: 7px; }
.sort { width: 10px; height: 6px; }
.extra { width: 25px; border-left: 1px solid #888; padding-left: 6px; }
.tree ul { list-style: none; padding-left: 3px; color: #222; }
.tree li { display: flex; align-items: center; height: 20px; white-space: nowrap; }
.tree li span { margin-left: 4px; }
.tree .in1 { padding-left: 19px; }
.tree .in2 { padding-left: 38px; }
.twig { width: 15px; height: 20px; }
.mark { width: 12px; height: 12px; margin: 0 2px; }
.in2 .mark { margin: 0 0 0 3px; }

.viewport { position: relative; flex: 1; min-width: 0; border-top: 1px solid #f80; border-left: 1px solid #f93; }
.scene { width: 100%; height: 100%; }
.axis text { font: 12px "Liberation Sans", sans-serif; }

.dialog { position: absolute; left: -1px; top: -15px; width: 355px; }
.caption { display: flex; width: 237px; height: 25px; margin-left: 1px; border: 1px solid #666; }
.caption button {
  flex: 1;
  display: grid;
  place-items: center;
  border-right: 1px solid #999;
  background: linear-gradient(#666 8px, #333 8px);
}
.caption h2 { width: 90px; padding-left: 4px; line-height: 22px; color: #fff; background: linear-gradient(#666 8px, #333 8px); border-right: 1px solid #999; white-space: nowrap; }
.caption svg { width: 12px; height: 12px; fill: none; stroke: #fff; stroke-width: 2; }
.caption .light { background: linear-gradient(#fff 12px, #ccc 12px); }
.caption .light svg { stroke: #666; }
.sheet { border: 1px solid #999; border-bottom: 0; background: #fff; padding: 7px 5px 4px 6px; }
.group {
  display: flex;
  height: 25px;
  border-left: 1px solid #ccc;
  border-right: 1px solid #999;
  background: linear-gradient(#fff 14px, #ccc 14px);
}
.group h3 { flex: 1; padding-left: 6px; line-height: 24px; color: #333; text-shadow: 1px 1px #fff; }
.group button { width: 26px; display: grid; place-items: center; border-left: 1px solid #eee; }
.group svg { width: 12px; height: 10px; }
.group.shut { height: 26px; border-bottom: 1px solid #999; }
.panel {
  display: flex;
  align-items: center;
  justify-content: space-between;
  height: 48px;
  padding: 0 8px 4px 7px;
  border: 1px solid #999;
  border-bottom-color: #ccc;
  border-radius: 3px;
  background: #ccc;
}
.panel.short { height: 40px; }
.pick { width: 217px; height: 31px; line-height: 31px; padding-left: 1px; }
.current { border-radius: 6px 0 0 6px; background: linear-gradient(90deg, #c96 100px, #c99 100px 114px, #cc9 114px); }
.picker {
  width: 32px;
  height: 32px;
  display: grid;
  place-items: center;
  border: 2px solid #777;
  border-right-color: #999;
  border-radius: 4px;
  background: linear-gradient(#fff 5px, #ddd 5px 23px, #fff 23px);
}
.picker.hot { border-color: #e72 #a75 #a75 #777; background: linear-gradient(#fff 4px, #fcb 4px 14px, #f95 14px 22px, #fcb 22px); }
.picker svg { width: 22px; height: 24px; }
.panel label { display: flex; align-items: center; gap: 6px; }
.panel input {
  appearance: none;
  width: 16px;
  height: 16px;
  border: 1px solid #666;
  border-radius: 3px;
  background: linear-gradient(#fff 4px, #ccc 4px 11px, #fff 11px);
}
.actions { display: flex; justify-content: flex-end; gap: 6px; margin-top: 3px; padding: 4px 10px 0 0; border-top: 1px solid #ccc; }
.actions button {
  width: 61px;
  height: 24px;
  border: 2px solid #777;
  border-top-width: 1px;
  border-radius: 4px;
  background: linear-gradient(#fff 7px, #ccc 7px 17px, #fff 17px);
  line-height: 20px;
}
.actions .ok { border-color: #272 #777 #777 #272; background: linear-gradient(#fff 3px, #cfc 3px 7px, #6c6 12px, #9c6 16px, #cfc 17px); }
.foot { height: 15px; background: linear-gradient(#ccc 7px, #000 7px 8px, #333 8px); border-bottom: 1px solid #000; border-radius: 0 0 6px 6px; }
```
